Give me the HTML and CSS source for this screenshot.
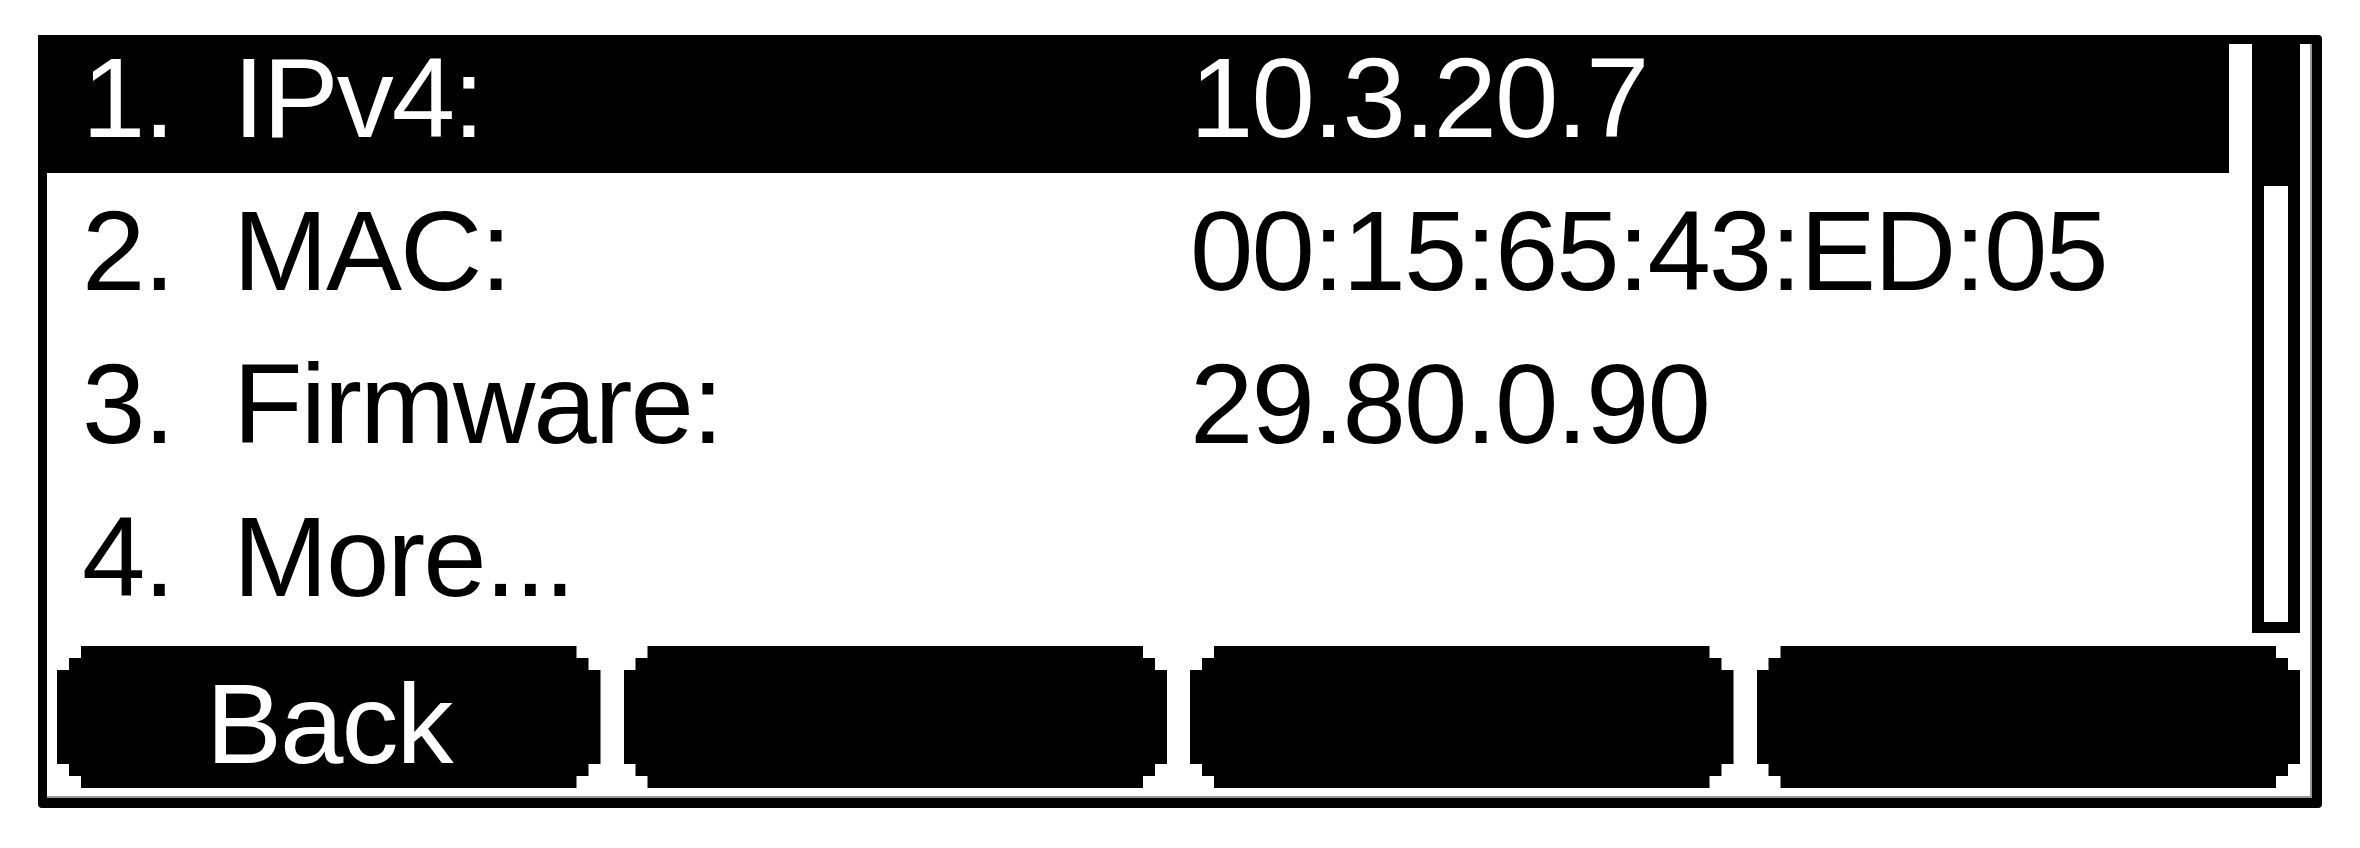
FILE: index.html
```html
<!DOCTYPE html>
<html lang="en">
<head>
  <meta charset="UTF-8">
  <title>Status</title>
  <link rel="stylesheet" href="styles.css">
</head>
<body>
  <div class="screen">
    <div class="main">
      <ul class="menu">
        <li class="item active">
          <span class="num">1.</span>
          <span class="label">IPv4:</span>
          <span class="value">10.3.20.7</span>
        </li>
        <li class="item">
          <span class="num">2.</span>
          <span class="label">MAC:</span>
          <span class="value">00:15:65:43:ED:05</span>
        </li>
        <li class="item">
          <span class="num">3.</span>
          <span class="label">Firmware:</span>
          <span class="value">29.80.0.90</span>
        </li>
        <li class="item">
          <span class="num">4.</span>
          <span class="label">More...</span>
          <span class="value"></span>
        </li>
      </ul>
      <div class="scrollbar">
        <div class="thumb"></div>
      </div>
    </div>

    <div class="softkeys">
      <div class="softkey">Back</div>
      <div class="softkey"></div>
      <div class="softkey"></div>
      <div class="softkey"></div>
    </div>
  </div>
</body>
</html>
```

FILE: styles.css
```css
body {
  margin: 0;
  background-color: #fff;
  font-family: "Liberation Sans", Arial, sans-serif;
  color: #000;
}
.screen {
  box-sizing: border-box;
  width: 2284px;
  height: 773px;
  margin: 35px 0 0 38px;
  border: solid #000;
  border-width: 9px 10px 10px 9px;
  border-radius: 4px;
  box-shadow: inset -2px -2px 0 #999;
  display: flex;
  flex-direction: column;
}
.main {
  display: flex;
  gap: 23px;
  height: 598px;
  margin: -9px 12px 0 -9px;
}
.menu {
  flex: 1;
  list-style: none;
  margin: 0;
  padding: 0;
  display: flex;
  flex-direction: column;
  gap: 15px;
}
.item {
  height: 138px;
  display: grid;
  grid-template-columns: 151px 957px auto;
  padding-left: 44px;
  font-size: 114px;
  line-height: 126px;
  letter-spacing: -2px;
  white-space: nowrap;
}
.item.active {
  background-color: #000;
  color: #fff;
}
.scrollbar {
  box-sizing: border-box;
  width: 48px;
  border: 12px solid #000;
  border-top: 0;
  border-bottom-width: 11px;
  background-color: #fff;
}
.thumb {
  height: 151px;
  background-color: #000;
}
.softkeys {
  display: flex;
  gap: 23px;
  height: 142px;
  margin: 13px 12px 0 10px;
}
.softkey {
  flex: 1;
  box-sizing: border-box;
  height: 142px;
  padding-top: 14px;
  background-color: #000;
  color: #fff;
  font-size: 114px;
  line-height: 128px;
  letter-spacing: -2px;
  text-align: center;
  clip-path: polygon(
    24px 0, calc(100% - 24px) 0, calc(100% - 24px) 12px, calc(100% - 12px) 12px,
    calc(100% - 12px) 24px, 100% 24px, 100% calc(100% - 24px), calc(100% - 12px) calc(100% - 24px),
    calc(100% - 12px) calc(100% - 12px), calc(100% - 24px) calc(100% - 12px), calc(100% - 24px) 100%, 24px 100%,
    24px calc(100% - 12px), 12px calc(100% - 12px), 12px calc(100% - 24px), 0 calc(100% - 24px),
    0 24px, 12px 24px, 12px 12px, 24px 12px
  );
}
```
